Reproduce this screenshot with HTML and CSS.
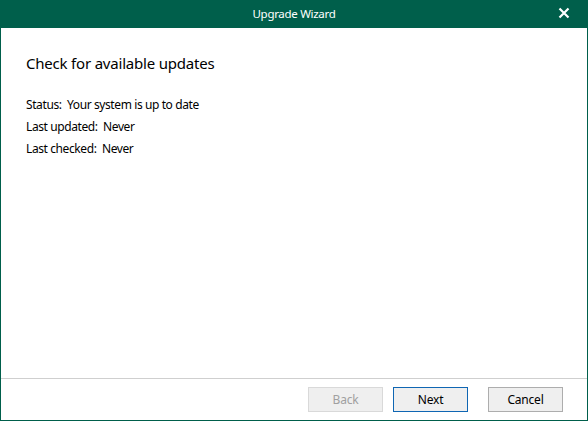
FILE: index.html
```html
<!DOCTYPE html>
<html>
<head>
<meta charset="utf-8">
<link rel="stylesheet" href="styles.css">
</head>
<body>
<div class="window">
  <div class="titlebar">
    <span class="title">Upgrade Wizard</span>
    <span class="close">
      <svg width="12" height="12" viewBox="0 0 12 12"><path d="M1.5 1.5 L10.5 10.5 M10.5 1.5 L1.5 10.5" stroke="#fff" stroke-width="2.2" fill="none"/></svg>
    </span>
  </div>
  <div class="content">
    <h1 class="heading">Check for available updates</h1>
    <div class="info">
      <div class="row">Status:&nbsp; Your system is up to date</div>
      <div class="row">Last updated:&nbsp; Never</div>
      <div class="row">Last checked:&nbsp; Never</div>
    </div>
  </div>
  <div class="footer">
    <button class="btn disabled">Back</button>
    <button class="btn primary">Next</button>
    <button class="btn cancel">Cancel</button>
  </div>
</div>
</body>
</html>
```

FILE: styles.css
```css
html, body {
  margin: 0;
  padding: 0;
  background: #ffffff;
}
body {
  font-family: "Noto Sans", "Open Sans", sans-serif;
  font-size: 12px;
  color: #000;
}
.window {
  width: 588px;
  height: 421px;
  box-sizing: border-box;
  border: 1px solid #005f4b;
  border-top: none;
  display: flex;
  flex-direction: column;
}
.titlebar {
  height: 28px;
  margin: 0 -1px;
  background: #005f4b;
  color: #fff;
  display: flex;
  align-items: center;
  justify-content: center;
  position: relative;
  flex: none;
}
.title {
  font-size: 11.5px;
  letter-spacing: -0.3px;
  line-height: 28px;
}
.close {
  position: absolute;
  right: 18px;
  top: 7px;
  width: 12px;
  height: 12px;
  display: flex;
}
.content {
  flex: 1;
  padding: 0 24px;
  border-bottom: 1px solid #cfcfcf;
}
.heading {
  font-weight: normal;
  font-size: 15px;
  letter-spacing: -0.2px;
  margin: 23px 0 0 1px;
  line-height: 24px;
}
.info {
  margin-top: 19px;
  margin-left: 1px;
}
.row {
  line-height: 22px;
  letter-spacing: -0.4px;
}
.footer {
  height: 41px;
  flex: none;
  display: flex;
  justify-content: flex-end;
  align-items: flex-start;
  padding: 8px 24px 0 0;
  box-sizing: border-box;
  gap: 10px;
}
.btn {
  width: 75px;
  height: 25px;
  box-sizing: border-box;
  background: #efefef;
  border: 1px solid #adadad;
  font-family: "Noto Sans", "Open Sans", sans-serif;
  font-size: 12px;
  letter-spacing: -0.2px;
  color: #000;
  padding: 0;
  margin: 0;
}
.btn.disabled {
  border-color: #d9d9d9;
  color: #a0a0a0;
}
.btn.primary {
  border-color: #0f66b3;
}
.btn.cancel {
  margin-left: 10px;
}
```
